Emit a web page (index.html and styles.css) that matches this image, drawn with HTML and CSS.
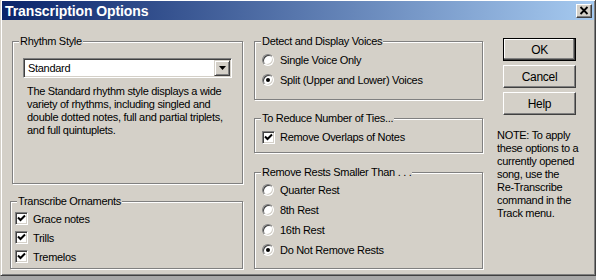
FILE: index.html
```html
<!DOCTYPE html>
<html>
<head>
<meta charset="utf-8">
<link rel="stylesheet" href="styles.css">
</head>
<body>
<div class="screen">
  <div class="dialog">
    <div class="titlebar">
      <span class="title">Transcription Options</span>
      <div class="close"><svg width="10" height="9" viewBox="0 0 10 9"><path d="M1.5 1 L8.5 8 M8.5 1 L1.5 8" stroke="#000" stroke-width="1.8" fill="none"/></svg></div>
    </div>
    <div class="content">
      <div class="col col-left">
        <div class="group rhythm">
          <div class="legend">Rhythm Style</div>
          <div class="combo">
            <span class="combo-text">Standard</span>
            <div class="combo-btn"><svg width="7" height="4" viewBox="0 0 7 4"><path d="M0 0 H7 L3.5 4 Z" fill="#000"/></svg></div>
          </div>
          <p class="desc">The Standard rhythm style displays a wide<br>variety of rhythms, including singled and<br>double dotted notes, full and partial triplets,<br>and full quintuplets.</p>
        </div>
        <div class="group ornaments">
          <div class="legend">Transcribe Ornaments</div>
          <div class="rows rows-orn">
            <div class="row row19"><span class="check checked"><svg width="9" height="9" viewBox="0 0 9 9"><path d="M1 3.5 L3.5 6 L8 1.5" stroke="#000" stroke-width="2" fill="none"/></svg></span><span class="lbl lbl-orn">Grace notes</span></div>
            <div class="row row19"><span class="check checked"><svg width="9" height="9" viewBox="0 0 9 9"><path d="M1 3.5 L3.5 6 L8 1.5" stroke="#000" stroke-width="2" fill="none"/></svg></span><span class="lbl lbl-orn">Trills</span></div>
            <div class="row row19"><span class="check checked"><svg width="9" height="9" viewBox="0 0 9 9"><path d="M1 3.5 L3.5 6 L8 1.5" stroke="#000" stroke-width="2" fill="none"/></svg></span><span class="lbl lbl-orn">Tremelos</span></div>
          </div>
        </div>
      </div>
      <div class="col col-mid">
        <div class="group detect">
          <div class="legend">Detect and Display Voices</div>
          <div class="rows rows-mid">
            <div class="row row20"><span class="radio"></span><span class="lbl">Single Voice Only</span></div>
            <div class="row row20"><span class="radio on"></span><span class="lbl">Split (Upper and Lower) Voices</span></div>
          </div>
        </div>
        <div class="group ties">
          <div class="legend">To Reduce Number of Ties...</div>
          <div class="rows rows-mid">
            <div class="row row20"><span class="check checked"><svg width="9" height="9" viewBox="0 0 9 9"><path d="M1 3.5 L3.5 6 L8 1.5" stroke="#000" stroke-width="2" fill="none"/></svg></span><span class="lbl lbl-chk">Remove Overlaps of Notes</span></div>
          </div>
        </div>
        <div class="group rests">
          <div class="legend">Remove Rests Smaller Than . . .</div>
          <div class="rows rows-rests">
            <div class="row row20"><span class="radio"></span><span class="lbl">Quarter Rest</span></div>
            <div class="row row20"><span class="radio"></span><span class="lbl">8th Rest</span></div>
            <div class="row row20"><span class="radio"></span><span class="lbl">16th Rest</span></div>
            <div class="row row20"><span class="radio on"></span><span class="lbl">Do Not Remove Rests</span></div>
          </div>
        </div>
      </div>
      <div class="col col-right">
        <div class="btn default">OK</div>
        <div class="btn">Cancel</div>
        <div class="btn">Help</div>
        <p class="note">NOTE: To apply<br>these options to a<br>currently opened<br>song, use the<br>Re-Transcribe<br>command in the<br>Track menu.</p>
      </div>
    </div>
  </div>
  <div class="below"></div>
</div>
</body>
</html>
```

FILE: styles.css
```css
html, body {
  margin: 0;
  padding: 0;
  background: #ffffff;
}
body {
  font-family: "Liberation Sans", Arial, sans-serif;
  font-size: 11px;
  letter-spacing: -0.3px;
  color: #000;
}
.screen {
  width: 599px;
  height: 280px;
  overflow: hidden;
  display: flex;
  flex-direction: column;
}
.dialog {
  box-sizing: border-box;
  width: 596px;
  height: 276px;
  flex: none;
  background: #d4d0c8;
  border: 1px solid;
  border-top-width: 0;
  border-color: #d4d0c8 #404040 #404040 #d4d0c8;
  box-shadow: inset 1px 1px 0 #ffffff, inset -1px -1px 0 #808080;
  padding: 1px 1px 1px 1px;
  display: flex;
  flex-direction: column;
}
.below {
  width: 596px;
  height: 4px;
  background: #a8a8a8;
}
.titlebar {
  height: 19px;
  flex: none;
  background: linear-gradient(to right, #0a246a, #a6caf0);
  display: flex;
  align-items: center;
  justify-content: space-between;
  padding-left: 3px;
}
.title {
  color: #fff;
  font-weight: bold;
  font-size: 14px;
  letter-spacing: -0.1px;
}
.close {
  width: 16px;
  height: 14px;
  box-sizing: border-box;
  margin-right: 2px;
  background: #d4d0c8;
  border: 1px solid;
  border-color: #ffffff #404040 #404040 #ffffff;
  box-shadow: inset -1px -1px 0 #808080;
  display: flex;
  align-items: center;
  justify-content: center;
}
.content {
  display: flex;
  padding: 21px 0 0 8px;
}
.col {
  display: flex;
  flex-direction: column;
  flex: none;
}
.col-left { width: 233px; }
.col-mid { width: 229px; margin-left: 11px; }
.col-right { width: 82px; margin-left: 14px; margin-top: -3px; }

.group {
  box-sizing: border-box;
  border: 1px solid #808080;
  box-shadow: inset 1px 1px 0 #ffffff, 1px 1px 0 #ffffff;
}
.legend {
  margin: -7px 0 0 6px;
  height: 13px;
  line-height: 13px;
  padding: 0 1px;
  background: #d4d0c8;
  align-self: flex-start;
  width: fit-content;
}
.rhythm { width: 231px; height: 143px; margin-left: 2px; }
.ornaments { width: 233px; height: 68px; margin-top: 17px; }
.detect { height: 59px; }
.ties { height: 35px; margin-top: 18px; }
.rests { height: 97px; margin-top: 19px; }

.combo {
  box-sizing: border-box;
  width: 209px;
  height: 20px;
  margin: 10px 0 0 10px;
  background: #fff;
  border: 1px solid;
  border-color: #808080 #ffffff #ffffff #808080;
  box-shadow: inset 1px 1px 0 #404040, inset -1px -1px 0 #d4d0c8;
  padding: 2px 2px 2px 4px;
  display: flex;
  align-items: center;
  justify-content: space-between;
}
.combo-text { line-height: 14px; }
.combo-btn {
  box-sizing: border-box;
  width: 16px;
  height: 16px;
  margin-right: -1px;
  background: #d4d0c8;
  border: 1px solid;
  border-color: #d4d0c8 #404040 #404040 #d4d0c8;
  box-shadow: inset 1px 1px 0 #ffffff, inset -1px -1px 0 #808080;
  display: flex;
  align-items: center;
  justify-content: center;
}
.desc {
  margin: 7px 0 0 14px;
  line-height: 13px;
  white-space: nowrap;
}

.rows { display: flex; flex-direction: column; }
.rows-orn { margin: 1px 0 0 4px; }
.rows-mid { margin: 2px 0 0 7px; }
.rows-rests { margin: 1px 0 0 7px; }
.row { display: flex; align-items: center; }
.row19 { height: 19px; }
.row20 { height: 20px; }

.radio {
  box-sizing: border-box;
  width: 12px;
  height: 12px;
  border-radius: 50%;
  background: #fff;
  border: 1px solid;
  border-color: #808080 #ffffff #ffffff #808080;
  box-shadow: inset 1px 1px 0 #404040, inset -1px -1px 0 #d4d0c8;
  display: flex;
  align-items: center;
  justify-content: center;
  flex: none;
}
.radio.on::after {
  content: "";
  width: 4px;
  height: 4px;
  border-radius: 50%;
  background: #000;
}
.check {
  box-sizing: border-box;
  width: 13px;
  height: 13px;
  background: #fff;
  border: 1px solid;
  border-color: #808080 #ffffff #ffffff #808080;
  box-shadow: inset 1px 1px 0 #404040, inset -1px -1px 0 #d4d0c8;
  display: flex;
  align-items: center;
  justify-content: center;
  flex: none;
}
.lbl { margin-left: 6px; white-space: nowrap; }
.lbl-orn { margin-left: 5px; }
.lbl-chk { margin-left: 5px; }

.btn {
  box-sizing: border-box;
  width: 73px;
  height: 23px;
  margin: 0 0 4px 6px;
  background: #d4d0c8;
  border: 1px solid;
  border-color: #ffffff #404040 #404040 #ffffff;
  box-shadow: inset -1px -1px 0 #808080;
  display: flex;
  align-items: center;
  justify-content: center;
  font-size: 12px;
}
.btn.default {
  border: 1px solid #000;
  box-shadow: inset -1px -1px 0 #404040, inset -2px -2px 0 #808080, inset 1px 1px 0 #ffffff;
}
.note {
  margin: 10px 0 0 0;
  line-height: 13px;
  white-space: nowrap;
}
```
